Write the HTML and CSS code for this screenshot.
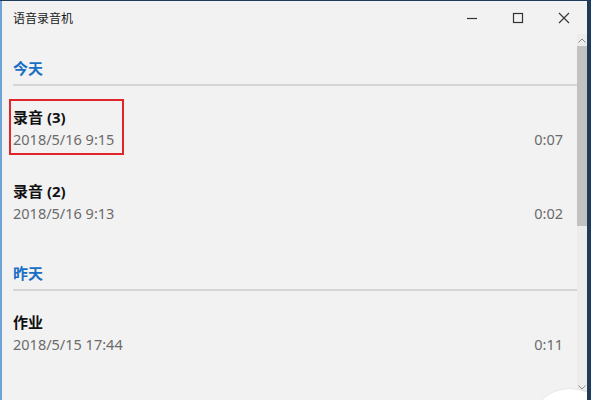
FILE: index.html
```html
<!DOCTYPE html>
<html lang="zh-CN">
<head>
    <meta charset="UTF-8">
    <title>语音录音机</title>
    <link rel="stylesheet" href="styles.css">
</head>
<body>
    <div class="window">
        <div class="titlebar">
            <div class="title">语音录音机</div>
            <div class="controls">
                <span class="ctrl">
                    <svg width="12" height="12" viewBox="0 0 12 12"><path d="M1 6.5h10" stroke="#333" stroke-width="1.2"/></svg>
                </span>
                <span class="ctrl">
                    <svg width="12" height="12" viewBox="0 0 12 12"><rect x="1.5" y="1.5" width="9" height="9" fill="none" stroke="#333" stroke-width="1.2"/></svg>
                </span>
                <span class="ctrl">
                    <svg width="12" height="12" viewBox="0 0 12 12"><path d="M1 1l10 10M11 1L1 11" stroke="#333" stroke-width="1.1"/></svg>
                </span>
            </div>
        </div>

        <div class="body">
            <div class="list">
                <div class="group">
                    <div class="group-title">今天</div>
                    <div class="divider"></div>
                </div>
                <div class="item">
                    <div class="item-text marked">
                        <div class="name">录音 (3)</div>
                        <div class="date">2018/5/16 9:15</div>
                    </div>
                    <div class="duration">0:07</div>
                </div>
                <div class="item">
                    <div class="item-text">
                        <div class="name">录音 (2)</div>
                        <div class="date">2018/5/16 9:13</div>
                    </div>
                    <div class="duration">0:02</div>
                </div>

                <div class="group later">
                    <div class="group-title">昨天</div>
                    <div class="divider"></div>
                </div>
                <div class="item">
                    <div class="item-text">
                        <div class="name">作业</div>
                        <div class="date">2018/5/15 17:44</div>
                    </div>
                    <div class="duration">0:11</div>
                </div>
            </div>

            <div class="scrollbar">
                <div class="arrow">
                    <svg width="8" height="5" viewBox="0 0 8 5"><path d="M0.5 4.5L4 1l3.5 3.5" fill="none" stroke="#8a8a8a" stroke-width="1"/></svg>
                </div>
                <div class="thumb"></div>
                <div class="track"></div>
                <div class="arrow bottom">
                    <svg width="8" height="5" viewBox="0 0 8 5"><path d="M0.5 0.5L4 4l3.5-3.5" fill="none" stroke="#8a8a8a" stroke-width="1"/></svg>
                </div>
            </div>
        </div>

        <div class="record-btn"></div>
    </div>
</body>
</html>
```

FILE: styles.css
```css
* {
    margin: 0;
    padding: 0;
    box-sizing: border-box;
}

body {
    background: #1f3b5c;
    font-family: "Noto Sans", "Noto Sans CJK SC", sans-serif;
    overflow: hidden;
}

.window {
    position: relative;
    width: 587px;
    height: 400px;
    margin-top: 1px;
    background: #f2f2f2;
    border-left: 2px solid #6fa3d6;
    display: flex;
    flex-direction: column;
    overflow: hidden;
}

.titlebar {
    height: 33px;
    display: flex;
    justify-content: space-between;
    align-items: center;
    padding-left: 11px;
}

.title {
    font-size: 12px;
    color: #1a1a1a;
    margin-top: 1px;
}

.controls {
    display: flex;
    height: 100%;
}

.ctrl {
    width: 46px;
    display: flex;
    align-items: center;
    justify-content: center;
}

.body {
    flex: 1;
    display: flex;
}

.list {
    flex: 1;
    padding-left: 11px;
}

.group {
    padding-top: 23px;
}

.group.later {
    padding-top: 28px;
}

.group-title {
    font-size: 15px;
    font-weight: bold;
    line-height: 22px;
    color: #1a6fc4;
}

.divider {
    height: 2px;
    margin-top: 5px;
    background: #d6d6d6;
}

.item {
    display: flex;
    justify-content: space-between;
    align-items: flex-end;
    padding: 20px 14px 10px 0;
}

.item-text {
    position: relative;
}

.marked::after {
    content: "";
    position: absolute;
    left: -4px;
    right: -10px;
    top: -7px;
    bottom: -5px;
    border: 2px solid #e0262a;
}

.name {
    font-size: 15px;
    font-weight: bold;
    line-height: 22px;
    color: #111;
}

.date,
.duration {
    font-size: 14.5px;
    line-height: 22px;
    color: #6b6b6b;
}

.scrollbar {
    width: 10px;
    display: flex;
    flex-direction: column;
    background: #ececec;
}

.arrow {
    height: 12px;
    display: flex;
    align-items: center;
    justify-content: center;
}

.arrow.bottom {
    margin-bottom: 8px;
}

.thumb {
    height: 180px;
    background: #c2c2c2;
}

.track {
    flex: 1;
}

.record-btn {
    position: absolute;
    right: -24px;
    bottom: -70px;
    width: 82px;
    height: 82px;
    border-radius: 50%;
    background: #fff;
    box-shadow: 0 0 2px rgba(0, 0, 0, 0.12);
}
```
